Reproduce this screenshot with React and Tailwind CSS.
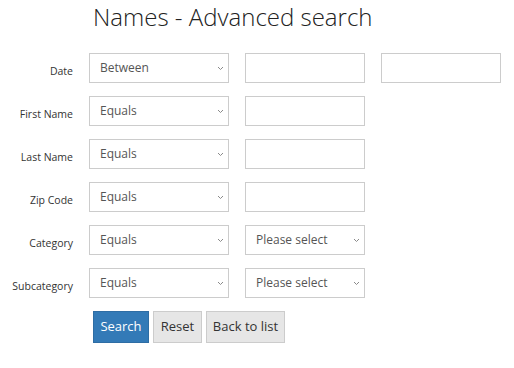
const FONT = { fontFamily: '"Open Sans", "Noto Sans", sans-serif' }

function Chevron() {
  return (
    <svg width="7" height="5" viewBox="0 0 7 5" className="shrink-0">
      <path d="M1 1 L3.5 3.5 L6 1" fill="none" stroke="#8a8a8a" strokeWidth="1" />
    </svg>
  )
}

function SelectBox({ value, width = 'w-[140px]' }) {
  return (
    <div className={`${width} h-[30px] border border-[#cccccc] bg-white flex items-center justify-between pl-[10px] pr-[4px] text-[12px] text-[#555555]`}>
      <span>{value}</span>
      <Chevron />
    </div>
  )
}

function InputBox() {
  return <div className="w-[120px] h-[30px] border border-[#cccccc] bg-white" />
}

const rows = [
  { label: 'Date', op: 'Between', extra: 'date' },
  { label: 'First Name', op: 'Equals', extra: 'input' },
  { label: 'Last Name', op: 'Equals', extra: 'input' },
  { label: 'Zip Code', op: 'Equals', extra: 'input' },
  { label: 'Category', op: 'Equals', extra: 'select' },
  { label: 'Subcategory', op: 'Equals', extra: 'select' },
]

export default function App() {
  return (
    <div className="w-[514px] h-[368px] bg-white text-[#333333]" style={FONT}>
      <h1 className="pl-[93px] pt-[1px] text-[24px] font-light leading-[32px] text-[#222222]">
        Names - Advanced search
      </h1>

      <div className="mt-[20px] flex flex-col gap-[13px]">
        {rows.map((row) => (
          <div key={row.label} className="flex items-center">
            <div className="w-[73px] text-right text-[10.5px] pt-[8px]">{row.label}</div>
            <div className="ml-[16px] flex gap-[16px]">
              <SelectBox value={row.op} />
              {row.extra === 'date' && (
                <>
                  <InputBox />
                  <InputBox />
                </>
              )}
              {row.extra === 'input' && <InputBox />}
              {row.extra === 'select' && <SelectBox value="Please select" width="w-[120px]" />}
            </div>
          </div>
        ))}
      </div>

      <div className="mt-[13px] ml-[93px] flex gap-[4px] text-[13px]">
        <button className="h-[32px] w-[56px] bg-[#337ab7] border border-[#2e6da4] text-white">Search</button>
        <button className="h-[32px] w-[49px] bg-[#e6e6e6] border border-[#cccccc] text-[#333333]">Reset</button>
        <button className="h-[32px] w-[79px] bg-[#e6e6e6] border border-[#cccccc] text-[#333333]">Back to list</button>
      </div>
    </div>
  )
}
